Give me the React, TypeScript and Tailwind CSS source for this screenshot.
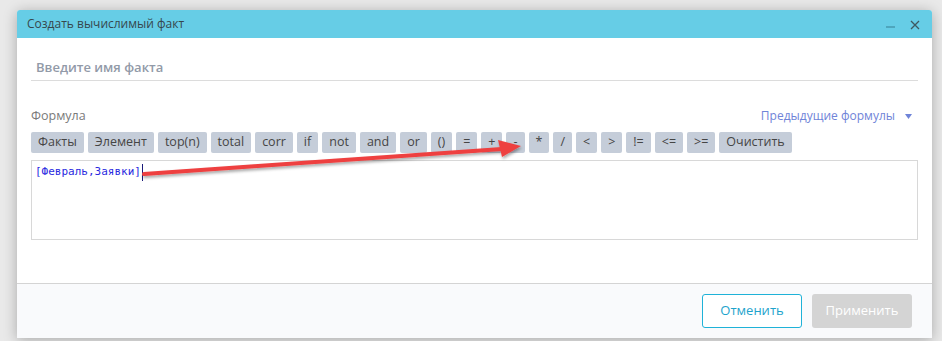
import React from "react";

const ops = ["Факты", "Элемент", "top(n)", "total", "corr", "if", "not", "and", "or", "()", "=", "+", "-", "*", "/", "<", ">", "!=", "<=", ">=", "Очистить"];

export default function App() {
  return (
    <div className="relative w-[942px] h-[341px] overflow-hidden bg-[#e9e9e9]" style={{ fontFamily: '"Open Sans", "Noto Sans", sans-serif' }}>
      <div className="absolute left-[17px] top-[10px] w-[915px] h-[328px] flex flex-col bg-white rounded-t-[3px] shadow-[0_2px_14px_rgba(0,0,0,0.28)]">
        {/* header */}
        <div className="h-[28px] bg-[#66cde6] rounded-t-[3px] flex items-center pl-[10px] pr-[12px]">
          <span className="text-[12px] text-[#36474d]">Создать вычислимый факт</span>
          <div className="ml-auto flex items-center gap-[15px]">
            <div className="w-[9px] h-[2px] bg-[#4ea6bd] mt-[6px]" />
            <svg width="10" height="10" viewBox="0 0 10 10" className="mt-[1px]">
              <path d="M1 1 L9 9 M9 1 L1 9" stroke="#3f5a60" strokeWidth="1.3" />
            </svg>
          </div>
        </div>
        {/* body */}
        <div className="flex-1 px-[14px]">
          <div className="mt-[20px] h-[23px] border-b border-[#dcdcdc] pl-[5px] text-[13px] font-semibold text-[#929aa8] leading-[18px]">
            Введите имя факта
          </div>
          <div className="mt-[26px] flex items-center justify-between">
            <span className="text-[12.5px] text-[#7a7a7a]">Формула</span>
            <span className="flex items-center gap-[10px] pr-[6px] text-[12px] text-[#6f84d8]">
              Предыдущие формулы
              <svg width="7" height="5" viewBox="0 0 7 5"><path d="M0 0 H7 L3.5 5 Z" fill="#6f84d8" /></svg>
            </span>
          </div>
          <div className="mt-[6px] flex gap-[4px]">
            {ops.map((o) => (
              <div key={o} className="h-[21px] px-[7px] flex items-center justify-center bg-[#c5cdd9] rounded-[2px] text-[12.5px] text-[#454545]">
                {o}
              </div>
            ))}
          </div>
          <div className="mt-[7px] h-[80px] border border-[#d8d8d8] px-[3px] pt-[3px] flex items-start">
            <span className="text-[11px] leading-[15px] text-[#2a2ae0]" style={{ fontFamily: '"DejaVu Sans Mono", monospace' }}>[Февраль,Заявки]</span>
            <span className="inline-block w-[1px] h-[17px] bg-[#1a1a7a] ml-[1px]" />
          </div>
        </div>
        {/* footer */}
        <div className="h-[55px] border-t border-[#d4d4d4] bg-[#f9fafc] flex items-center justify-end gap-[10px] pr-[20px]">
          <button className="w-[100px] h-[34px] border border-[#1fb2d8] rounded-[3px] bg-white text-[13px] text-[#1ea3cc]">Отменить</button>
          <button className="w-[100px] h-[34px] rounded-[3px] bg-[#d4d4d4] text-[13px] text-white">Применить</button>
        </div>
      </div>
      <svg className="absolute left-0 top-0 pointer-events-none" width="942" height="341" viewBox="0 0 942 341">
        <defs>
          <filter id="sh" x="-10%" y="-100%" width="120%" height="300%">
            <feDropShadow dx="1" dy="2" stdDeviation="1.5" floodColor="#000" floodOpacity="0.35" />
          </filter>
        </defs>
        <g filter="url(#sh)">
          <path d="M144 174 L502 149" stroke="#ee4040" strokeWidth="4" strokeLinecap="round" />
          <path d="M521 146 L498 140 L502 157 Z" fill="#ee4040" />
        </g>
      </svg>
    </div>
  );
}
